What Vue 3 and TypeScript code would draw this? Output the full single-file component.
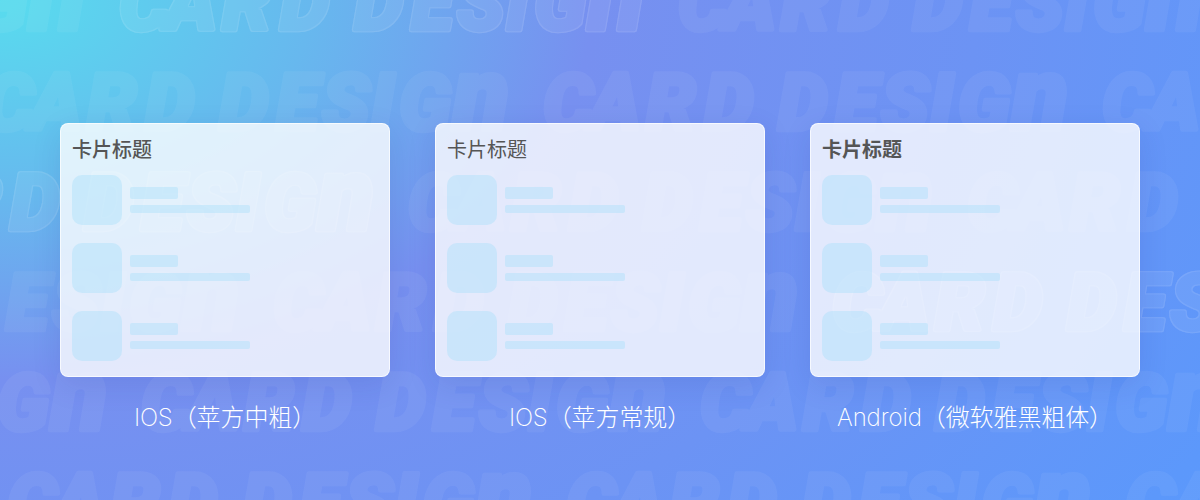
<template>
  <div class="page">
    <svg class="pattern" width="1200" height="500" viewBox="0 0 1200 500" aria-hidden="true">
      <defs>
        <!-- keeps only a thin rim of the letters, on top of a faint fill -->
        <filter id="rim" x="-5%" y="-20%" width="110%" height="140%">
          <feMorphology in="SourceAlpha" operator="erode" radius="1" result="inner" />
          <feComposite in="SourceGraphic" in2="inner" operator="out" result="edge" />
          <feComponentTransfer in="SourceGraphic" result="body">
            <feFuncA type="linear" slope="0.5" />
          </feComponentTransfer>
          <feMerge>
            <feMergeNode in="body" />
            <feMergeNode in="edge" />
          </feMerge>
        </filter>
      </defs>
      <g
        v-for="(w, i) in words"
        :key="i"
        :class="['word', { outlined: w.outlined }]"
        :transform="`translate(${w.x} ${w.y})`"
      >
        <text y="0" :x="letterX">CARD DESIG</text>
        <text class="tail" y="0" :x="tailX">n</text>
      </g>
    </svg>

    <div class="cards">
      <div v-for="card in cards" :key="card.label" class="column">
        <div class="card">
          <div :class="['card-title', card.weight]">卡片标题</div>
          <div v-for="n in 3" :key="n" class="item">
            <div class="thumb"></div>
            <div class="lines">
              <div class="line short"></div>
              <div class="line long"></div>
            </div>
          </div>
        </div>
        <div class="label">{{ card.label }}</div>
      </div>
    </div>
  </div>
</template>

<script setup lang="ts">
interface Card {
  label: string
  weight: 'medium' | 'regular' | 'bold'
}

interface Word {
  x: number
  y: number
  outlined: boolean
}

const cards: Card[] = [
  { label: 'IOS（苹方中粗）', weight: 'medium' },
  { label: 'IOS（苹方常规）', weight: 'regular' },
  { label: 'Android（微软雅黑粗体）', weight: 'bold' },
]

// left edge of every letter, the space included
const letterX = [-1, 45, 102, 160, 215, 234, 291, 337, 386, 414].join(' ')
const tailX = 468

const step = 559
const starts = [120, -15, -150, -285, -417, -551]
const outlined = ['0-1', '2-1', '3-3']

const words: Word[] = starts.flatMap((start, row) =>
  [0, 1, 2, 3, 4].map((n) => ({
    x: start + (n - 1) * step,
    y: 30 + row * 100,
    outlined: outlined.includes(`${row}-${n}`),
  })),
).filter((w) => w.x > -step && w.x < 1200)
</script>

<style>
body {
  margin: 0;
}
</style>

<style scoped>
.page {
  position: relative;
  width: 1200px;
  height: 500px;
  overflow: hidden;
  background: radial-gradient(
    1480px 950px at 0 0,
    #58dcee 0%,
    #67b8ee 21%,
    #7790f0 40%,
    #6c93f4 66%,
    #5c98fb 94%,
    #5a99fc 100%
  );
}
.pattern {
  position: absolute;
  left: 0;
  top: 0;
}
.word {
  font-family: Roboto, 'Liberation Sans', sans-serif;
  font-size: 79px;
  font-weight: 900;
  font-style: italic;
  fill: #fff;
  stroke: #fff;
  stroke-width: 4.5px;
  stroke-linejoin: round;
  opacity: 0.05;
}
.word .tail {
  font-size: 103px;
}
.word.outlined {
  filter: url(#rim);
  opacity: 0.15;
}
.cards {
  position: relative;
  display: flex;
  gap: 45px;
  padding: 123px 60px 0;
}
.column {
  width: 330px;
}
.card {
  box-sizing: border-box;
  height: 254px;
  padding: 11px 11px 0;
  border: 1px solid rgba(255, 255, 255, 0.7);
  border-radius: 8px;
  background: rgba(255, 255, 255, 0.8);
  box-shadow: 0 8px 30px rgba(31, 38, 135, 0.11);
}
.card-title {
  height: 28px;
  margin-bottom: 12px;
  line-height: 28px;
  font-family: 'Noto Sans CJK SC', sans-serif;
  font-size: 20px;
  color: #555;
}
.card-title.medium {
  font-weight: 500;
}
.card-title.regular {
  font-weight: 400;
}
.card-title.bold {
  font-weight: 700;
}
.item {
  display: flex;
  align-items: center;
  gap: 8px;
  height: 50px;
  margin-bottom: 18px;
}
.thumb {
  width: 50px;
  height: 50px;
  border-radius: 10px;
  background: rgba(164, 222, 251, 0.4);
}
.line {
  border-radius: 2px;
  background: rgba(164, 222, 251, 0.4);
}
.line.short {
  width: 48px;
  height: 12px;
  margin-bottom: 6px;
}
.line.long {
  width: 120px;
  height: 8px;
}
.label {
  margin-top: 23px;
  line-height: 36px;
  text-align: center;
  white-space: nowrap;
  font-family: Inter, 'Noto Sans CJK SC', sans-serif;
  font-size: 24px;
  font-weight: 200;
  letter-spacing: -0.1px;
  color: #fff;
}
</style>
